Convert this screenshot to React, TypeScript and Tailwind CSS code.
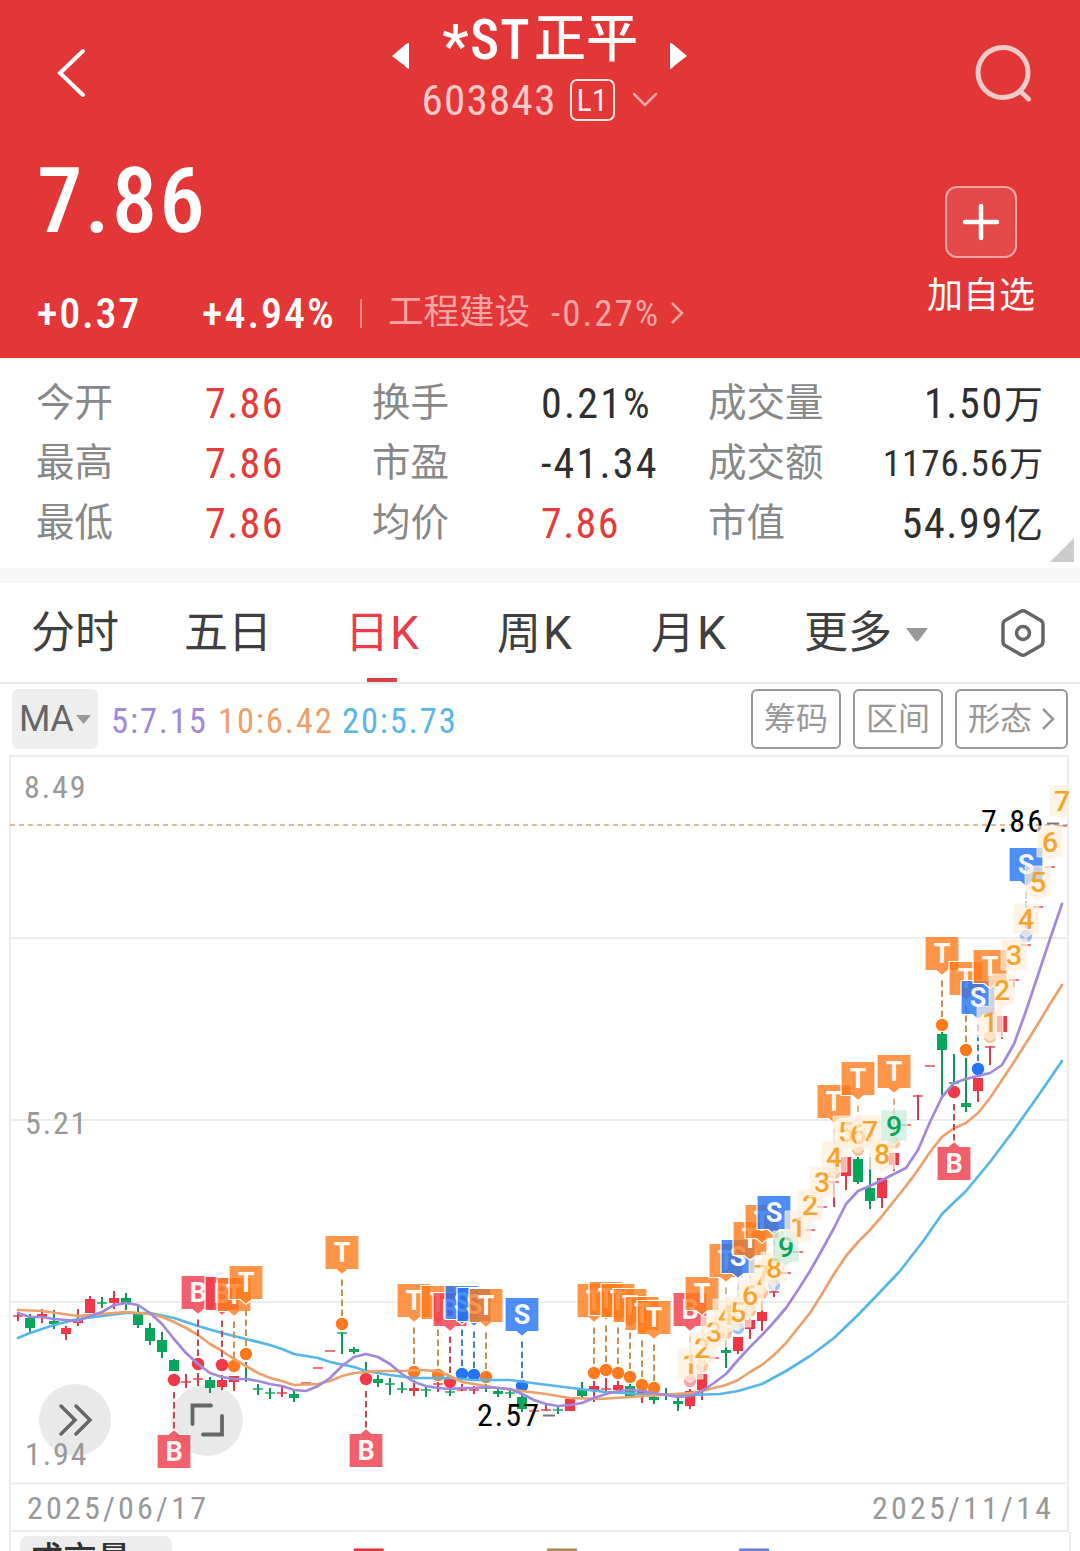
import React from "react";

type Candle = [number, "r" | "g", number, number, number, number];

const candles: Candle[] = [
  [0, "r", 1315, 1317, 1312, 1321], [1, "g", 1318, 1328, 1314, 1333], [2, "r", 1314, 1317, 1309, 1323],
  [3, "g", 1321, 1324, 1310, 1329], [4, "r", 1328, 1334, 1326, 1340], [5, "r", 1319, 1323, 1309, 1326],
  [6, "r", 1299, 1313, 1296, 1313], [7, "g", 1302, 1304, 1297, 1308], [8, "r", 1298, 1303, 1291, 1309],
  [9, "g", 1298, 1303, 1293, 1310], [10, "g", 1314, 1325, 1306, 1328], [11, "g", 1328, 1341, 1323, 1345],
  [12, "g", 1340, 1352, 1332, 1358], [13, "g", 1360, 1371, 1359, 1371], [14, "r", 1381, 1383, 1374, 1388],
  [15, "r", 1378, 1380, 1373, 1386], [16, "g", 1380, 1388, 1377, 1393], [17, "r", 1380, 1387, 1375, 1390],
  [18, "r", 1376, 1382, 1376, 1391], [19, "g", 1378, 1380, 1362, 1382], [20, "g", 1388, 1390, 1384, 1395],
  [21, "g", 1392, 1394, 1388, 1399], [22, "r", 1392, 1394, 1387, 1397], [23, "g", 1394, 1398, 1391, 1402],
  [24, "r", 1382, 1384, 1382, 1384], [25, "r", 1367, 1369, 1367, 1369], [26, "r", 1350, 1352, 1350, 1352],
  [27, "g", 1332, 1334, 1332, 1354], [28, "g", 1349, 1352, 1347, 1354], [29, "g", 1376, 1378, 1362, 1380],
  [30, "g", 1379, 1383, 1375, 1387], [31, "g", 1383, 1385, 1378, 1395], [32, "g", 1388, 1390, 1382, 1393],
  [33, "r", 1388, 1391, 1380, 1396], [34, "g", 1389, 1391, 1387, 1397], [35, "r", 1383, 1385, 1382, 1392],
  [36, "g", 1391, 1393, 1388, 1396], [37, "r", 1389, 1391, 1384, 1391], [38, "r", 1389, 1391, 1386, 1394],
  [39, "g", 1387, 1389, 1384, 1392], [40, "g", 1391, 1394, 1389, 1397], [41, "g", 1392, 1394, 1390, 1398],
  [42, "g", 1397, 1409, 1393, 1412], [43, "r", 1410, 1412, 1410, 1412], [44, "r", 1409, 1411, 1404, 1411],
  [45, "g", 1409, 1411, 1406, 1414], [46, "r", 1399, 1411, 1399, 1411], [47, "g", 1390, 1396, 1382, 1398],
  [48, "r", 1386, 1391, 1381, 1402], [49, "r", 1388, 1390, 1378, 1395], [50, "r", 1385, 1390, 1381, 1390],
  [51, "g", 1386, 1398, 1384, 1398], [52, "r", 1390, 1393, 1386, 1403], [53, "g", 1397, 1400, 1394, 1404],
  [54, "g", 1393, 1395, 1388, 1400], [55, "g", 1401, 1404, 1398, 1411], [56, "r", 1391, 1406, 1389, 1409],
  [57, "r", 1374, 1390, 1374, 1400], [58, "r", 1357, 1359, 1357, 1359], [59, "g", 1350, 1353, 1340, 1368],
  [60, "r", 1337, 1351, 1337, 1354], [61, "r", 1320, 1329, 1318, 1339], [62, "r", 1312, 1321, 1301, 1331],
  [63, "r", 1291, 1293, 1291, 1297], [64, "r", 1272, 1274, 1272, 1274], [65, "r", 1251, 1253, 1251, 1253],
  [66, "r", 1229, 1231, 1229, 1231], [67, "r", 1206, 1208, 1206, 1208], [68, "r", 1181, 1183, 1181, 1207],
  [69, "r", 1157, 1176, 1157, 1190], [70, "g", 1159, 1182, 1157, 1184], [71, "g", 1188, 1201, 1157, 1209],
  [72, "r", 1178, 1198, 1178, 1208], [73, "r", 1153, 1165, 1153, 1171], [74, "r", 1124, 1126, 1124, 1126],
  [75, "r", 1095, 1097, 1095, 1120], [76, "r", 1065, 1067, 1065, 1067], [77, "g", 1034, 1050, 1032, 1095],
  [78, "g", 1082, 1084, 1054, 1084], [79, "g", 1103, 1107, 1058, 1112], [80, "r", 1078, 1091, 1078, 1102],
  [81, "r", 1046, 1048, 1046, 1065], [82, "r", 1016, 1032, 1016, 1039], [83, "r", 979, 981, 979, 987],
  [84, "r", 944, 946, 944, 946], [85, "r", 906, 908, 906, 908], [86, "r", 866, 868, 866, 868],
  [87, "r", 825, 827, 825, 827],
];

const ma5 =
  "18,1313 30,1317 42,1317 54,1319 66,1320 78,1321 90,1316 102,1312 114,1305 126,1303 138,1305 150,1313 162,1324 174,1339 186,1353 198,1364 210,1373 222,1377 234,1379 246,1379 258,1381 270,1384 282,1386 294,1390 306,1391 318,1386 330,1378 342,1366 354,1357 366,1354 378,1357 390,1364 402,1374 414,1382 426,1386 438,1388 450,1389 462,1388 474,1388 486,1387 498,1388 510,1389 522,1394 534,1400 546,1404 558,1406 570,1405 582,1403 594,1398 606,1394 618,1391 630,1390 642,1391 654,1393 666,1395 678,1397 690,1396 702,1391 714,1383 726,1374 738,1360 750,1347 762,1335 774,1322 786,1308 798,1290 810,1271 822,1250 834,1228 846,1204 858,1191 870,1186 882,1180 894,1174 906,1168 918,1150 930,1122 942,1097 954,1083 966,1079 978,1076 990,1073 1002,1065 1014,1044 1026,1011 1038,975 1050,939 1062,904";
const ma10 =
  "18,1310 42,1311 78,1316 102,1314 126,1312 150,1314 162,1317 174,1322 186,1328 198,1335 210,1344 222,1351 234,1359 246,1366 258,1373 270,1378 282,1381 294,1385 318,1384 330,1381 342,1376 354,1373 378,1371 402,1371 420,1370 438,1371 450,1376 462,1382 480,1385 498,1388 522,1391 546,1394 570,1398 600,1399 630,1397 660,1395 690,1393 702,1391 726,1385 738,1380 750,1372 762,1365 774,1355 786,1343 798,1328 810,1313 822,1294 834,1274 846,1256 858,1242 870,1230 882,1216 894,1201 906,1186 918,1170 930,1152 942,1137 954,1128 966,1123 978,1113 990,1098 1002,1080 1014,1062 1026,1043 1038,1024 1050,1004 1062,985";
const ma20 =
  "18,1338 30,1333 42,1329 54,1325 66,1322 78,1319 102,1316 126,1313 150,1313 174,1318 198,1326 222,1333 246,1339 270,1345 282,1349 294,1354 318,1358 330,1362 354,1367 366,1371 390,1375 414,1378 450,1378 474,1380 510,1380 540,1384 580,1389 606,1392 640,1394 690,1395 720,1394 738,1391 762,1384 786,1371 810,1356 834,1338 858,1315 882,1290 900,1271 924,1240 942,1214 966,1191 990,1162 1014,1130 1038,1096 1062,1061";

type Kind = "B" | "S" | "T";
// kind, centre x, top of the flag, centre of its dot, flag below the dot, dimmed dot
type Flag = [Kind, number, number, number, boolean?, boolean?];

const flags: Flag[] = [
  ["B", 174, 1435, 1380, true], ["B", 198, 1276, 1364], ["B", 222, 1277, 1365], ["T", 234, 1278, 1366],
  ["T", 246, 1266, 1354], ["T", 342, 1236, 1324], ["B", 366, 1434, 1379, true], ["T", 414, 1284, 1372],
  ["T", 438, 1286, 1375], ["B", 450, 1293, 1382], ["S", 462, 1286, 1374], ["S", 474, 1288, 1375],
  ["T", 486, 1289, 1377], ["S", 522, 1298, 1386], ["T", 594, 1284, 1373], ["T", 606, 1282, 1370],
  ["T", 618, 1284, 1373], ["T", 630, 1289, 1377], ["T", 642, 1297, 1385], ["T", 654, 1301, 1388],
  ["B", 690, 1293, 1381, false, true], ["T", 702, 1277, 1366, false, true], ["T", 726, 1244, 1333, false, true],
  ["S", 738, 1240, 1328, false, true], ["T", 750, 1222, 1311, false, true], ["T", 762, 1205, 1293, false, true],
  ["S", 774, 1196, 1285, false, true], ["T", 834, 1085, 1173, false, true], ["T", 858, 1062, 1150, false, true],
  ["T", 894, 1055, 1143, false, true], ["T", 942, 937, 1025], ["B", 954, 1147, 1092, true],
  ["T", 966, 962, 1050], ["S", 978, 981, 1069], ["T", 990, 950, 1037, false, true],
  ["S", 1026, 848, 936, false, true],
];

const counts: [string, number, number][] = [
  ["1", 690, 1364], ["2", 702, 1348], ["3", 714, 1332], ["4", 726, 1315], ["5", 738, 1312], ["6", 750, 1295],
  ["7", 762, 1275], ["8", 774, 1268], ["9", 786, 1247], ["1", 798, 1227], ["2", 810, 1205], ["3", 822, 1182],
  ["4", 834, 1157], ["5", 846, 1132], ["6", 858, 1134], ["7", 870, 1131], ["8", 882, 1154], ["9", 894, 1126],
  ["1", 990, 1022], ["2", 1002, 990], ["3", 1014, 955], ["4", 1026, 919], ["5", 1038, 882], ["6", 1050, 842],
  ["7", 1062, 801],
];

const solid: Record<Kind, string> = { T: "#ff7a1c", B: "#f03848", S: "#2273f5" };
const stem: Record<Kind, string> = { T: "#d0914f", B: "#c54a55", S: "#3f82c4" };

function FlagMark({ f }: { f: Flag }) {
  const [kind, x, top, dot, below, dim] = f;
  const l = x - 17;
  const r = x + 17;
  const t = top - 0.5;
  const b = top + 33.5;
  const d = below
    ? `M${l} ${t}H${x - 6}L${x} ${t - 5}L${x + 6} ${t}H${r}V${b}H${l}Z`
    : `M${l} ${t}H${r}V${b}H${x + 6}L${x} ${b + 5}L${x - 6} ${b}H${l}Z`;
  return (
    <g>
      <line x1={x} x2={x} y1={below ? dot + 12 : b + 10} y2={below ? top - 5 : dot - 7} stroke={stem[kind]} strokeWidth="2" strokeDasharray="6.5 3.5" opacity={dim ? 0.7 : 1} />
      <path d={d} fill={solid[kind]} fillOpacity="0.8" stroke="#fff" strokeWidth="1.2" strokeLinejoin="round" />
      <text x={x} y={top + 26} textAnchor="middle" fontSize="27" fontWeight="700" fill="#fff" fillOpacity="0.95">{kind}</text>
    </g>
  );
}

function CountMark({ c }: { c: [string, number, number] }) {
  const [n, x, y] = c;
  const green = n === "9";
  return (
    <g>
      <path
        d={`M${x - 13} ${y - 16}h26v31h-8l-5 4l-5 -4h-8Z`}
        fill={green ? "#c4ecda" : "#ffeeda"}
        fillOpacity="0.7"
        stroke="#fff"
        strokeOpacity="0.6"
        strokeWidth="1"
      />
      <text x={x} y={y + 10} textAnchor="middle" fontSize="28.5" fontWeight="500" fill={green ? "#0aa55b" : "#f5a52c"}>{n}</text>
    </g>
  );
}

function AxisText({ x, y, w, children, fill = "#999", size = 32 }: { x: number; y: number; w: number; children: string; fill?: string; size?: number }) {
  return (
    <text x={x} y={y} textLength={w} lengthAdjust="spacing" fontSize={size} fill={fill} className="[font-stretch:75%]">{children}</text>
  );
}

function Chart() {
  return (
    <svg className="block shrink-0" width="1080" height="778" viewBox="0 754 1080 778" fontFamily="Roboto, sans-serif">
      <defs>
        <clipPath id="plot"><rect x="10" y="754" width="1059" height="778" /></clipPath>
      </defs>
      <g stroke="#ececec" strokeWidth="2" fill="none">
        <path d="M9 756H1069M10 938H1068M10 1120H1068M10 1302H1068M10 1483.500H1068M10 1531H1068M10 755V1532M1068 755V1532" />
      </g>
      <circle cx="75" cy="1420" r="36" fill="#e9e9e9" />
      <circle cx="207" cy="1420" r="36" fill="#e9e9e9" />
      <path d="M61 1406L75 1420L61 1434M76 1406L90 1420L76 1434" fill="none" stroke="#666" strokeWidth="3.500" strokeLinecap="round" strokeLinejoin="miter" />
      <path d="M211 1405.500H192.500V1424M203 1434.500H222V1416" fill="none" stroke="#666" strokeWidth="3.800" strokeLinecap="round" />
      <AxisText x={24} y={798} w={61.5}>8.49</AxisText>
      <AxisText x={25} y={1134} w={61.5}>5.21</AxisText>
      <AxisText x={25} y={1465} w={61.5}>1.94</AxisText>
      <AxisText x={27} y={1519} w={179}>2025/06/17</AxisText>
      <AxisText x={872} y={1519} w={179}>2025/11/14</AxisText>
      <g>
        {candles.map(([i, c, t, b, h, l]) => {
          const x = 18 + i * 12;
          const thin = b - t <= 2;
          const color = c === "r" ? "#ef3746" : "#06a75c";
          const wick = c === "r" ? "#cf3f4c" : "#16935a";
          return (
            <g key={i}>
              {l - h > 2 && <rect x={x - 1} y={h} width="2" height={l - h} fill={wick} />}
              <rect x={x - 5} y={t} width="10" height={b - t} fill={color} opacity={thin ? 0.7 : 1} />
            </g>
          );
        })}
      </g>
      <g>
        {flags.map(([kind, x, , dot, , dim]) => (
          <circle key={kind + x} cx={x} cy={dot} r="6.200" fill={solid[kind]} opacity={dim ? 0.45 : 1} />
        ))}
      </g>
      <g fill="none" strokeWidth="2.700" strokeLinejoin="round" strokeLinecap="round">
        <polyline points={ma20} stroke="#56b6e8" />
        <polyline points={ma10} stroke="#eda069" />
        <polyline points={ma5} stroke="#a288dc" />
      </g>
      <path d="M10 825H1068" stroke="#cda877" strokeWidth="1.600" strokeDasharray="5 4" />
      <AxisText x={981} y={832} w={62} fill="#000">7.86</AxisText>
      <path d="M1047 823.500H1059" stroke="#777" strokeWidth="2" />
      <AxisText x={477} y={1426} w={62} fill="#000">2.57</AxisText>
      <path d="M543 1415.500H555" stroke="#777" strokeWidth="2" />
      <g clipPath="url(#plot)">
        {flags.map((f) => <FlagMark key={f[0] + f[1]} f={f} />)}
        {counts.map((c) => <CountMark key={c[1]} c={c} />)}
      </g>
    </svg>
  );
}

function Header() {
  return (
    <header className="flex h-[358px] flex-col bg-[#e33637] text-white">
      <div className="flex h-[146px] items-start justify-between">
        <svg className="mt-[46px] ml-[54px]" width="36" height="54" viewBox="0 0 36 54" fill="none" stroke="#fff" strokeWidth="4" strokeLinecap="round">
          <path d="M29 5L6 27L29 49" />
        </svg>
        <div className="ml-[15px] flex flex-col items-center pt-[10px]">
          <div className="flex h-[60px] items-center">
            <svg className="mt-[32px]" width="19" height="28" viewBox="0 0 19 28" fill="#fff"><path d="M18 1V27Q16 27 14 24L1 14L14 3Q16 1 18 1Z" /></svg>
            <h1 className="mr-[31px] ml-[32px] flex h-[60px] w-[196px] items-center whitespace-nowrap text-[52px] leading-[60px] font-medium">
              <span className="w-[28px] pt-[12px] text-[60px]">*</span>
              <span className="w-[64px] text-[55px] tracking-[1px] [font-stretch:75%]">ST</span>
              <span>正平</span>
            </h1>
            <svg className="mt-[32px]" width="19" height="28" viewBox="0 0 19 28" fill="#fff"><path d="M1 1V27Q3 27 5 24L18 14L5 3Q3 1 1 1Z" /></svg>
          </div>
          <div className="mt-[9px] flex h-[42px] items-center">
            <span className="w-[148px] text-[43px] leading-none tracking-[1.3px] text-[#ffc9c9] [font-stretch:75%]">603843</span>
            <span className="flex h-[42px] w-[45px] items-center justify-center rounded-[7px] border-[2.5px] border-[#ffe4e4] text-[32px] leading-none text-[#ffecec] [font-stretch:75%]">L1</span>
            <svg className="ml-[17px]" width="26" height="16" viewBox="0 0 26 16" fill="none" stroke="#f2a5a5" strokeWidth="2.500" strokeLinecap="round"><path d="M2 2L13 13L24 2" /></svg>
          </div>
        </div>
        <svg className="mt-[42px] mr-[46px]" width="60" height="62" viewBox="0 0 60 62" fill="none" stroke="#f0c9c9" strokeWidth="5" strokeLinecap="round">
          <circle cx="29" cy="30.500" r="25" />
          <path d="M46 49L54.500 57" />
        </svg>
      </div>
      <div className="flex h-[212px] justify-between pr-[45px] pl-[37px]">
        <div className="flex flex-col">
          <div className="mt-[9px] text-[91px] leading-[92px] font-medium tracking-[2px] [font-stretch:75%]">7.86</div>
          <div className="mt-[44px] flex h-[44px] items-center whitespace-nowrap">
            <span className="w-[165px] pt-[2px] text-[42px] leading-none font-medium tracking-[1.8px] [font-stretch:75%]">+0.37</span>
            <span className="w-[158px] pt-[2px] text-[42px] leading-none font-medium tracking-[2px] [font-stretch:75%]">+4.94%</span>
            <i className="h-[29px] w-[2px] bg-[#ee8585]" />
            <span className="ml-[26px] w-[163px] text-[35.5px] leading-none text-[#f8a5a5]">工程建设</span>
            <span className="w-[118px] text-[37px] leading-none tracking-[2px] text-[#f8a5a5] [font-stretch:75%]">-0.27%</span>
            <svg width="16" height="26" viewBox="0 0 16 26" fill="none" stroke="#f8a5a5" strokeWidth="2.500"><path d="M3 3L13 13L3 23" /></svg>
          </div>
        </div>
        <div className="flex w-[108px] flex-col items-center pt-[40px]">
          <div className="flex size-[72px] items-center justify-center rounded-[12px] border-2 border-white/50 bg-white/10">
            <svg width="38" height="38" viewBox="0 0 38 38" stroke="#fff" strokeWidth="4.500" strokeLinecap="round"><path d="M19 3V35M3 19H35" /></svg>
          </div>
          <div className="mt-[18px] text-[36px] leading-[40px] whitespace-nowrap">加自选</div>
        </div>
      </div>
    </header>
  );
}

const stats: [string, string, boolean, string, string, boolean, string, string, string][] = [
  ["今开", "7.86", true, "换手", "0.21%", false, "成交量", "1.50", "万"],
  ["最高", "7.86", true, "市盈", "-41.34", false, "成交额", "1176.56", "万"],
  ["最低", "7.86", true, "均价", "7.86", true, "市值", "54.99", "亿"],
];

function Stats() {
  return (
    <section className="relative h-[210px] bg-white pt-[15px] pr-[37px] pl-[36px]">
      {stats.map((s) => (
        <div key={s[0]} className="flex h-[60px] items-center text-[42px] leading-none whitespace-nowrap text-[#2f2f2f]">
          <span className="w-[168px] text-[38.5px] text-[#888]">{s[0]}</span>
          <span className="w-[168px] pt-[2px] pl-px tracking-[1.4px] text-[#e23b3b] [font-stretch:75%]">{s[1]}</span>
          <span className="w-[168px] text-[38.5px] text-[#888]">{s[3]}</span>
          <span className={s[5] ? "w-[168px] pt-[2px] pl-px tracking-[1.4px] text-[#e23b3b] [font-stretch:75%]" : "w-[168px] pt-[2px] pl-px tracking-[2.2px] [font-stretch:75%]"}>{s[4]}</span>
          <span className="text-[38.5px] text-[#888]">{s[6]}</span>
          <span className={s[7].length > 6 ? "ml-auto text-[37px] tracking-[1px] [font-stretch:75%]" : "ml-auto pt-[2px] tracking-[1.7px] [font-stretch:75%]"}>
            {s[7]}<span className={s[7].length > 6 ? "text-[34px] tracking-normal" : "text-[39px] tracking-normal"}>{s[8]}</span>
          </span>
        </div>
      ))}
      <svg className="absolute right-[6px] bottom-[6px]" width="24" height="24" viewBox="0 0 24 24"><path d="M24 0V24H0Z" fill="#ccc" /></svg>
    </section>
  );
}

function Tabs() {
  return (
    <nav className="flex h-[101px] items-center border-b-2 border-[#e9e9e9] bg-white pl-[31px] text-[44px] leading-none whitespace-nowrap text-[#3f3f3f]">
      <span className="w-[153px]">分时</span>
      <span className="w-[161px]">五日</span>
      <span className="relative flex h-full w-[152px] items-center text-[#e93d48]">
        日<span className="ml-[1px] text-[46px]">K</span>
        <i className="absolute bottom-0 left-[22px] h-[4px] w-[30px] bg-[#db4048]" />
      </span>
      <span className="w-[154px]">周<span className="ml-[2px] text-[46px]">K</span></span>
      <span className="w-[153px]">月<span className="ml-[2px] text-[46px]">K</span></span>
      <span>更多</span>
      <svg className="mt-[4px] ml-[14px]" width="22" height="14" viewBox="0 0 22 14" fill="#999"><path d="M0 0H22L13 12Q11 14.500 9 12Z" /></svg>
      <svg className="ml-[72px]" width="46" height="50" viewBox="0 0 46 50" fill="none" stroke="#666" strokeWidth="3.500" strokeLinejoin="round">
        <path d="M20.500 3.500Q23 2.200 25.500 3.500L41 12.500Q43 14 43 16V34Q43 36 41 37.500L25.500 46.500Q23 47.800 20.500 46.500L5 37.500Q3 36 3 34V16Q3 14 5 12.500Z" />
        <circle cx="23" cy="25" r="6.500" />
      </svg>
    </nav>
  );
}

function Indicators() {
  return (
    <div className="flex h-[70px] items-start bg-white pt-[5px] pr-[12px] pl-[12px] leading-none whitespace-nowrap">
      <div className="flex h-[60px] w-[86px] items-center rounded-[6px] bg-[#eee] pl-[7px] text-[36px] text-[#666]">
        <span className="w-[57px] tracking-[-0.5px]">MA</span>
        <svg width="15" height="9" viewBox="0 0 15 9" fill="#999"><path d="M0 0H15L7.500 9Z" /></svg>
      </div>
      <div className="ml-[13px] flex h-[64px] items-center text-[34.5px] tracking-[1.9px] [font-stretch:75%]">
        <span className="w-[107px] text-[#a288dc]">5:7.15</span>
        <span className="w-[124px] text-[#eda069]">10:6.42</span>
        <span className="text-[#56b6e8]">20:5.73</span>
      </div>
      <div className="ml-auto flex gap-[12px] text-[32px] text-[#999]">
        <span className="flex h-[60px] w-[90px] items-center justify-center rounded-[6px] border-2 border-[#999]">筹码</span>
        <span className="flex h-[60px] w-[90px] items-center justify-center rounded-[6px] border-2 border-[#999]">区间</span>
        <span className="flex h-[60px] w-[113px] items-center justify-center gap-[9px] rounded-[6px] border-2 border-[#999]">
          形态
          <svg width="14" height="24" viewBox="0 0 14 24" fill="none" stroke="#999" strokeWidth="2.500"><path d="M2 2L12 12L2 22" /></svg>
        </span>
      </div>
    </div>
  );
}

function VolumeBar() {
  return (
    <div className="mx-[9px] h-[19px] overflow-hidden border-x-2 border-[#ececec] bg-white pt-[4px]">
      <div className="flex h-[60px] items-start text-[34px] leading-none whitespace-nowrap">
        <span className="ml-[9px] h-[60px] w-[152px] rounded-[8px] bg-[#ededed] pt-[6px] pl-[9px] font-medium text-[#333]">成交量</span>
        <span className="w-[204px] pt-[10px] pl-[18px] text-[#d63a3f]">1115.0271万</span>
        <span className="w-[192px] pt-[10px] pl-[18px] text-[#b08a5a]">10:11.047万</span>
        <span className="pt-[10px] pl-[18px] text-[#6a80cf]">20:51.037万</span>
      </div>
    </div>
  );
}

export default function App() {
  return (
    <main className="h-[1551px] w-[1080px] overflow-hidden bg-white font-['Roboto','Noto_Sans_CJK_SC',sans-serif]">
      <Header />
      <Stats />
      <div className="h-[15px] bg-[#f7f7f7]" />
      <Tabs />
      <Indicators />
      <Chart />
      <VolumeBar />
    </main>
  );
}
